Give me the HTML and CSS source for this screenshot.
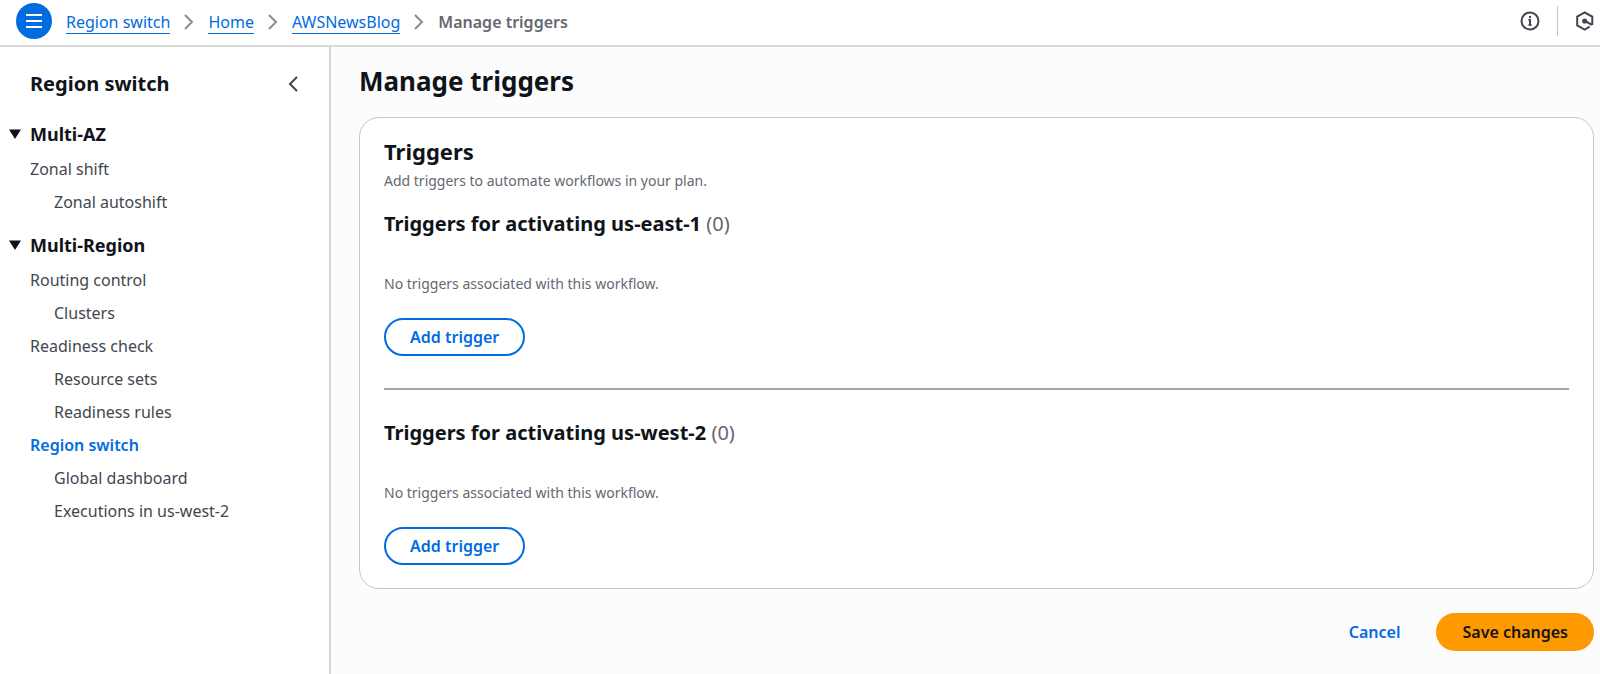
FILE: index.html
```html
<!DOCTYPE html>
<html lang="en">
<head>
<meta charset="utf-8">
<title>Manage triggers</title>
<link rel="stylesheet" href="styles.css">
</head>
<body>
<header class="topbar">
  <button class="menu-button" type="button" aria-label="Toggle navigation">
    <svg width="36" height="36" viewBox="0 0 36 36" fill="none" stroke="#fff" stroke-width="2"><path d="M10 12h16M10 18h16M10 24h16"/></svg>
  </button>
  <nav class="breadcrumbs" aria-label="Breadcrumbs">
    <a class="crumb" href="#">Region switch</a>
    <svg class="separator" width="12" height="18" viewBox="0 0 12 18"><path d="M2 2l7 7-7 7"/></svg>
    <a class="crumb" href="#">Home</a>
    <svg class="separator" width="12" height="18" viewBox="0 0 12 18"><path d="M2 2l7 7-7 7"/></svg>
    <a class="crumb" href="#">AWSNewsBlog</a>
    <svg class="separator" width="12" height="18" viewBox="0 0 12 18"><path d="M2 2l7 7-7 7"/></svg>
    <span class="crumb-current">Manage triggers</span>
  </nav>
  <div class="tools">
    <button class="tool" type="button" aria-label="Info">
      <svg width="20" height="20" viewBox="0 0 20 20" fill="none" stroke="#424650" stroke-width="2"><circle cx="10" cy="10" r="8.5"/><path d="M8.500 9h1.500v5M8.500 14h3M10 5v2"/></svg>
    </button>
    <span class="tool-divider"></span>
    <button class="tool" type="button" aria-label="Assistant">
      <svg width="20" height="20" viewBox="0 0 20 20" fill="none" stroke="#424650" stroke-width="2"><path d="M17.300 14V5.700L9.700 1.500 2.200 5.700v8.600l7.500 4.200 5-2.800"/><circle cx="9.700" cy="10" r="2.600" fill="#424650" stroke="none"/><path d="M10 10l7 3.800"/></svg>
    </button>
  </div>
</header>
<div class="layout">
  <aside class="sidebar">
    <div class="sidebar-header">
      <h2 class="sidebar-title">Region switch</h2>
      <button class="collapse" type="button" aria-label="Close navigation">
        <svg width="12" height="18" viewBox="0 0 12 18" fill="none" stroke="#424650" stroke-width="2"><path d="M10 2L3 9l7 7"/></svg>
      </button>
    </div>
    <nav class="side-nav" aria-label="Region switch">
      <section class="nav-section">
        <button class="nav-toggle" type="button" aria-expanded="true"><svg width="12" height="10" viewBox="0 0 12 10" fill="#0f141a"><path d="M0 .500h12L6 10z"/></svg>Multi-AZ</button>
        <ul class="nav-list">
          <li><a class="nav-link" href="#">Zonal shift</a></li>
          <li><a class="nav-link nested" href="#">Zonal autoshift</a></li>
        </ul>
      </section>
      <section class="nav-section">
        <button class="nav-toggle" type="button" aria-expanded="true"><svg width="12" height="10" viewBox="0 0 12 10" fill="#0f141a"><path d="M0 .500h12L6 10z"/></svg>Multi-Region</button>
        <ul class="nav-list">
          <li><a class="nav-link" href="#">Routing control</a></li>
          <li><a class="nav-link nested" href="#">Clusters</a></li>
          <li><a class="nav-link" href="#">Readiness check</a></li>
          <li><a class="nav-link nested" href="#">Resource sets</a></li>
          <li><a class="nav-link nested" href="#">Readiness rules</a></li>
          <li><a class="nav-link active" href="#" aria-current="page">Region switch</a></li>
          <li><a class="nav-link nested" href="#">Global dashboard</a></li>
          <li><a class="nav-link nested" href="#">Executions in us-west-2</a></li>
        </ul>
      </section>
    </nav>
  </aside>
  <main class="content">
    <h1 class="page-title">Manage triggers</h1>
    <div class="card">
      <h2 class="heading">Triggers</h2>
      <p class="note">Add triggers to automate workflows in your plan.</p>
      <section class="workflow">
        <h3 class="subheading">Triggers for activating us-east-1 <span class="count">(0)</span></h3>
        <p class="note empty">No triggers associated with this workflow.</p>
        <button class="button outline" type="button">Add trigger</button>
      </section>
      <hr class="divider">
      <section class="workflow">
        <h3 class="subheading">Triggers for activating us-west-2 <span class="count">(0)</span></h3>
        <p class="note empty">No triggers associated with this workflow.</p>
        <button class="button outline" type="button">Add trigger</button>
      </section>
    </div>
    <div class="actions">
      <button class="button link" type="button">Cancel</button>
      <button class="button primary" type="button">Save changes</button>
    </div>
  </main>
</div>
</body>
</html>
```
FILE: styles.css
```css
* { box-sizing: border-box; }
body {
  margin: 0;
  min-height: 100vh;
  display: flex;
  flex-direction: column;
  background: #fff;
  color: #0f141a;
  font: 16px/24px "Noto Sans", "Open Sans", sans-serif;
}
h1, h2, h3, p, ul { margin: 0; padding: 0; }
ul { list-style: none; }
svg { display: block; flex: none; }
a { color: inherit; text-decoration: none; }
button { font: inherit; color: inherit; border: 0; padding: 0; background: none; cursor: pointer; }

.topbar {
  display: flex;
  align-items: center;
  padding: 3px 5px 6px 16px;
  border-bottom: 2px solid #d9dade;
}
.menu-button { border-radius: 50%; background: #006ce0; }
.breadcrumbs { display: flex; align-items: center; gap: 13px; margin-left: 14px; padding-top: 2px; }
.crumb { color: #006ce0; line-height: 22px; border-bottom: 1px solid #006ce0; }
.crumb-current { color: #656871; font-weight: 600; }
.separator { fill: none; stroke: #8c8c94; stroke-width: 2; }
.tools { display: flex; align-items: center; gap: 17px; margin-left: auto; }
.tool-divider { width: 1px; height: 30px; background: #c6c6cd; }

.layout { flex: 1; display: flex; }
.sidebar { width: 331px; flex: none; padding: 23px 30px 24px 9px; border-right: 2px solid #d2d3d8; }
.sidebar-header { display: flex; align-items: center; justify-content: space-between; padding-left: 21px; }
.sidebar-title { font-size: 20px; line-height: 28px; font-weight: 700; }
.side-nav { display: flex; flex-direction: column; gap: 19px; margin-top: 24px; }
.nav-toggle { display: flex; align-items: center; gap: 9px; font-size: 18px; font-weight: 700; }
.nav-list { display: flex; flex-direction: column; gap: 9px; margin: 11px 0 0 21px; }
.nav-link { display: block; color: #424650; }
.nested { padding-left: 24px; }
.active { color: #006ce0; font-weight: 600; }

.content { flex: 1; min-width: 0; padding: 16px 6px 24px 28px; background: #fcfcfd; }
.page-title { font-size: 26px; line-height: 36px; font-weight: 700; }
.card { margin-top: 18px; padding: 19px 24px 23px; border: 1px solid #c6c6cd; border-radius: 20px; background: #fff; }
.heading { font-size: 22px; line-height: 28px; font-weight: 700; }
.subheading { font-size: 20px; line-height: 28px; font-weight: 700; }
.note { font-size: 14px; line-height: 20px; color: #656871; }
.card > .note { margin-top: 6px; }
.count { color: #656871; font-weight: 400; }
.workflow { margin-top: 19px; }
.empty { margin: 36px 0 24px; }
.divider { height: 2px; margin: 32px 0 29px; border: 0; background: #a4a4ad; }
.button { height: 38px; padding: 0 24px; border: 2px solid transparent; border-radius: 19px; font-weight: 600; }
.outline { color: #006ce0; border-color: #006ce0; }
.link { color: #006ce0; }
.primary { background: #ff9900; }
.actions { display: flex; justify-content: flex-end; gap: 10px; margin-top: 24px; }
```
